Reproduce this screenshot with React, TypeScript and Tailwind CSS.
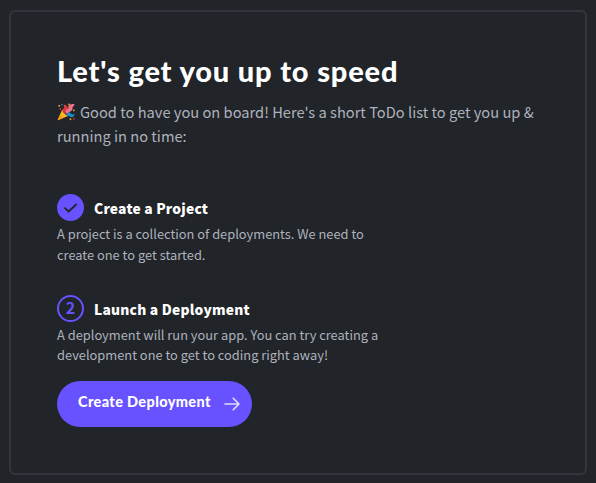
import type { ReactNode } from "react";

function PartyPopper() {
  return (
    <svg viewBox="0 0 18 18" className="mt-[3px] h-[18px] w-[18px] shrink-0">
      <path d="M0.6 17.2 L5.2 6.6 Q9.6 8.6 11.2 13 Z" fill="#fcb91f" />
      <path d="M0.6 17.2 L3 11.6 L6.4 15 Z" fill="#f59a1c" />
      <path d="M5.2 6.6 Q10.6 7.6 11.2 13 Q6.4 11.4 5.2 6.6 Z" fill="#8e2a3c" />
      <path d="M6 9.4 C4.6 6 8.2 5.6 6.6 1.4 C11.4 1.8 12 6.4 9.4 9.8 Z" fill="#dc3a3f" />
      <path d="M8.6 9.4 C8.4 5.2 12 7 11.4 3.8 C11.4 1.4 15 1 17.4 1 C17.4 3.8 15 3.2 15.6 5.4 C15.4 8.6 12.4 7.6 10.8 11 Z" fill="#ef7390" />
      <path d="M9.4 11.2 C11 8.8 13 9.4 14 10.8 C15 12.2 16.6 11.4 17.6 10.2 C17.6 13.6 15.4 15 13.2 13.8 C12 12.8 11.4 12.4 9.8 12.8 Z" fill="#1593d2" />
      <rect x="1.4" y="2" width="1.7" height="1.7" fill="#e8a32a" />
      <rect x="4.2" y="1" width="1.4" height="1.4" fill="#3183c8" />
      <rect x="2.4" y="5" width="1.6" height="1.6" fill="#c83c42" />
      <rect x="11.2" y="0.6" width="1.6" height="1.6" fill="#e8a32a" />
      <rect x="16" y="6.6" width="1.6" height="1.6" fill="#e8a32a" />
      <rect x="12.6" y="15.4" width="1.7" height="1.7" fill="#e8a32a" />
      <rect x="16" y="15" width="1.5" height="1.5" fill="#c83c42" />
    </svg>
  );
}

function Step({ badge, title, lines }: { badge: ReactNode; title: string; lines: ReactNode }) {
  return (
    <section>
      <div className="flex h-[27px] items-center gap-2.5">
        {badge}
        <h2 className="text-[13.8px] leading-5 font-black tracking-[0.21px] text-white">{title}</h2>
      </div>
      {lines}
    </section>
  );
}

export default function App() {
  return (
    <main className="h-[483px] w-[596px] bg-[#212428] pt-2.5 pl-[9px] font-['Noto_Sans_CJK_SC',sans-serif] text-[#adb2bd]">
      <div className="h-[465px] w-[578px] rounded-md border-2 border-[#32353e] pt-[41px] pl-[46px] whitespace-nowrap">
        <h1 className="h-9 font-['Lato',sans-serif] text-[29px] leading-9 font-black tracking-[0.84px] text-white">Let's get you up to speed</h1>
        <div className="mt-[11px] text-[14.67px] leading-6">
          <p className="flex gap-[5px]">
            <PartyPopper />
            <span>Good to have you on board! Here's a short ToDo list to get you up &amp;</span>
          </p>
          <p>running in no time:</p>
        </div>
        <div className="mt-[46px]">
          <Step
            badge={
              <span className="flex size-[27px] items-center justify-center rounded-full bg-[#6851ff]">
                <svg viewBox="0 0 27 27" className="size-[27px]" fill="none" stroke="#212428" strokeWidth="1.8" strokeLinecap="round" strokeLinejoin="round">
                  <path d="M8 14.2 L11.6 17.5 L19.2 10.5" />
                </svg>
              </span>
            }
            title="Create a Project"
            lines={
              <p className="mt-[2px] text-[12.85px] leading-[21px]">
                A project is a collection of deployments. We need to
                <br />
                create one to get started.
              </p>
            }
          />
        </div>
        <div className="mt-[30px]">
          <Step
            badge={
              <span className="flex size-[27px] items-center justify-center rounded-full border-2 border-[#6851ff] pb-[3px] text-[16px] leading-none font-bold text-[#6851ff]">
                2
              </span>
            }
            title="Launch a Deployment"
            lines={
              <p className="mt-[3px] text-[12.85px] leading-5">
                A deployment will run your app. You can try creating a
                <br />
                development one to get to coding right away!
              </p>
            }
          />
        </div>
        <button className="mt-4 flex h-[46px] w-[195px] items-center rounded-full bg-[#6851ff] pl-[21px] font-['Lato',sans-serif] text-[14.5px] font-black tracking-[0.36px] text-white">
          <span className="w-[146px] pb-1 text-left">Create Deployment</span>
          <svg viewBox="0 0 16 14" className="h-3.5 w-4" fill="none" stroke="#e1dcff" strokeWidth="1.6" strokeLinecap="round" strokeLinejoin="round">
            <path d="M1 7 H15 M9.2 1.2 L15 7 L9.2 12.8" />
          </svg>
        </button>
      </div>
    </main>
  );
}
